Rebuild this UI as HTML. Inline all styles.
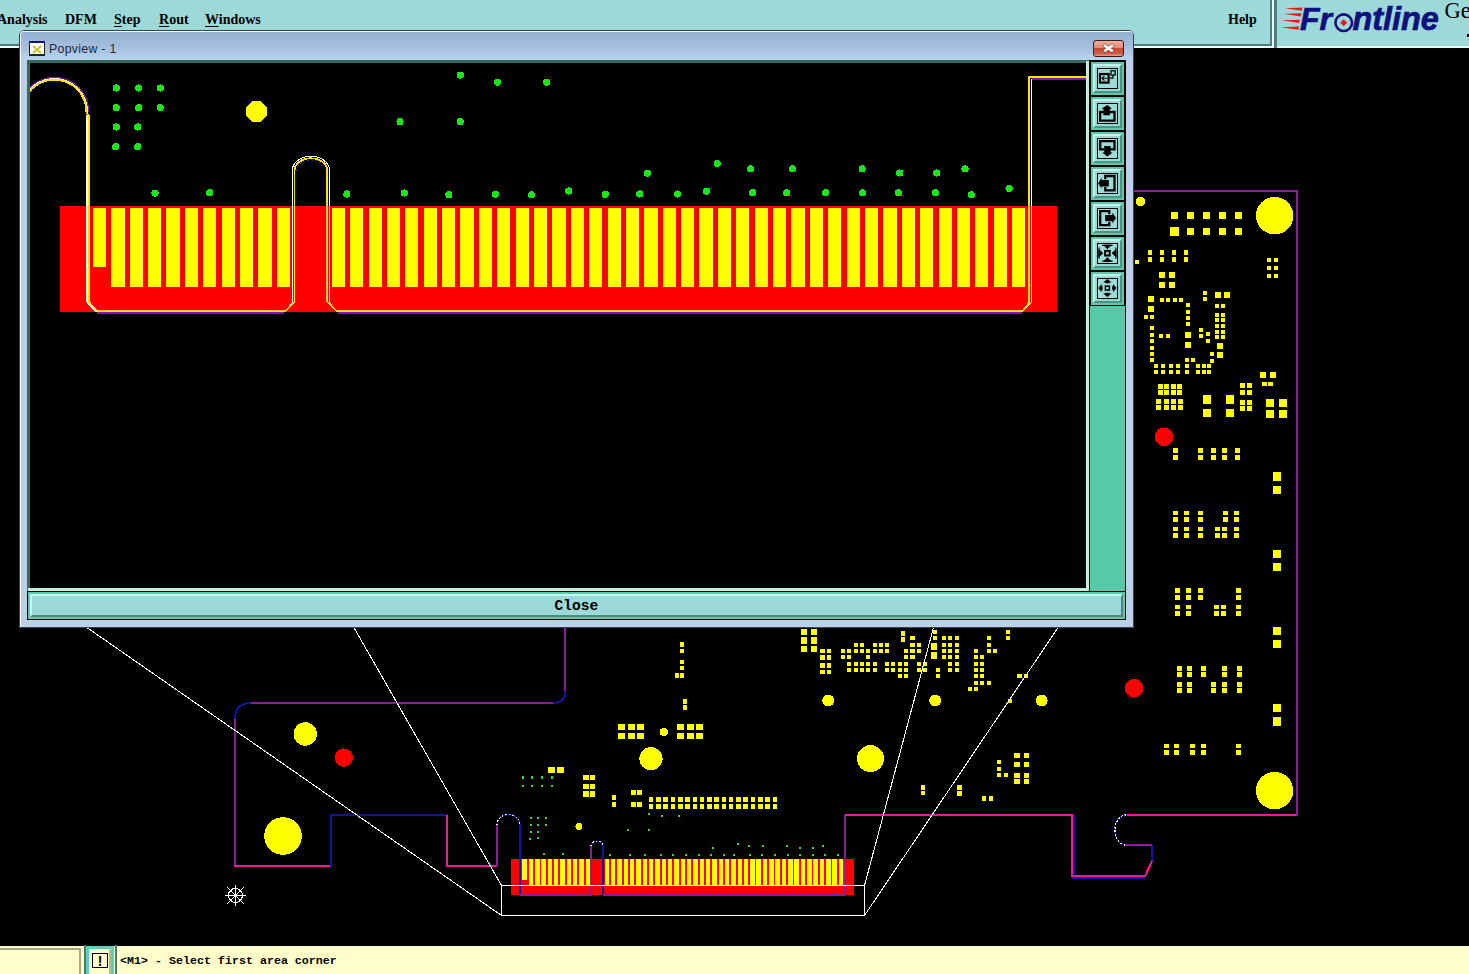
<!DOCTYPE html><html><head><meta charset="utf-8"><style>
*{margin:0;padding:0;box-sizing:border-box}
html,body{width:1469px;height:974px;overflow:hidden;background:#000}
body{position:relative;font-family:"Liberation Sans",sans-serif}
.abs{position:absolute}
#menubar{position:absolute;left:0;top:0;width:1469px;height:48px;background:#9dd9d9;overflow:hidden}
.menu{position:absolute;top:12px;font:bold 14px "Liberation Serif",serif;color:#000;white-space:nowrap}
.u{text-decoration:underline;text-underline-offset:2px}
#status{position:absolute;left:0;top:946px;width:1469px;height:28px;background:#fffecb}
#win{position:absolute;left:19px;top:30px;width:1115px;height:598px;border-radius:5px 5px 0 0;background:#bcd0e8;overflow:hidden}
.tb{position:absolute;left:1px;width:34px;height:34px;background:#5ccaa8}
</style></head><body>
<svg class="abs" style="left:0;top:0" width="1469" height="974" viewBox="0 0 1469 974" shape-rendering="crispEdges">
<rect x="510.9" y="858.9" width="343.1" height="35.9" fill="#ff0000"/>
<rect x="522.3" y="859.1" width="4.5" height="21.0" fill="#ffff00"/>
<rect x="528.6" y="859.1" width="4.5" height="26.0" fill="#ffff00"/>
<rect x="535.0" y="859.1" width="4.5" height="26.0" fill="#ffff00"/>
<rect x="541.3" y="859.1" width="4.5" height="26.0" fill="#ffff00"/>
<rect x="547.6" y="859.1" width="4.5" height="26.0" fill="#ffff00"/>
<rect x="553.9" y="859.1" width="4.5" height="26.0" fill="#ffff00"/>
<rect x="560.3" y="859.1" width="4.5" height="26.0" fill="#ffff00"/>
<rect x="566.6" y="859.1" width="4.5" height="26.0" fill="#ffff00"/>
<rect x="572.9" y="859.1" width="4.5" height="26.0" fill="#ffff00"/>
<rect x="579.2" y="859.1" width="4.5" height="26.0" fill="#ffff00"/>
<rect x="585.6" y="859.1" width="4.5" height="26.0" fill="#ffff00"/>
<rect x="604.6" y="859.1" width="4.5" height="26.0" fill="#ffff00"/>
<rect x="610.9" y="859.1" width="4.5" height="26.0" fill="#ffff00"/>
<rect x="617.3" y="859.1" width="4.5" height="26.0" fill="#ffff00"/>
<rect x="623.6" y="859.1" width="4.5" height="26.0" fill="#ffff00"/>
<rect x="629.9" y="859.1" width="4.5" height="26.0" fill="#ffff00"/>
<rect x="636.2" y="859.1" width="4.5" height="26.0" fill="#ffff00"/>
<rect x="642.6" y="859.1" width="4.5" height="26.0" fill="#ffff00"/>
<rect x="648.9" y="859.1" width="4.5" height="26.0" fill="#ffff00"/>
<rect x="655.2" y="859.1" width="4.5" height="26.0" fill="#ffff00"/>
<rect x="661.5" y="859.1" width="4.5" height="26.0" fill="#ffff00"/>
<rect x="667.9" y="859.1" width="4.5" height="26.0" fill="#ffff00"/>
<rect x="674.2" y="859.1" width="4.5" height="26.0" fill="#ffff00"/>
<rect x="680.5" y="859.1" width="4.5" height="26.0" fill="#ffff00"/>
<rect x="686.9" y="859.1" width="4.5" height="26.0" fill="#ffff00"/>
<rect x="693.2" y="859.1" width="4.5" height="26.0" fill="#ffff00"/>
<rect x="699.5" y="859.1" width="4.5" height="26.0" fill="#ffff00"/>
<rect x="705.8" y="859.1" width="4.5" height="26.0" fill="#ffff00"/>
<rect x="712.2" y="859.1" width="4.5" height="26.0" fill="#ffff00"/>
<rect x="718.5" y="859.1" width="4.5" height="26.0" fill="#ffff00"/>
<rect x="724.8" y="859.1" width="4.5" height="26.0" fill="#ffff00"/>
<rect x="731.1" y="859.1" width="4.5" height="26.0" fill="#ffff00"/>
<rect x="737.5" y="859.1" width="4.5" height="26.0" fill="#ffff00"/>
<rect x="743.8" y="859.1" width="4.5" height="26.0" fill="#ffff00"/>
<rect x="750.1" y="859.1" width="4.5" height="26.0" fill="#ffff00"/>
<rect x="756.4" y="859.1" width="4.5" height="26.0" fill="#ffff00"/>
<rect x="762.8" y="859.1" width="4.5" height="26.0" fill="#ffff00"/>
<rect x="769.1" y="859.1" width="4.5" height="26.0" fill="#ffff00"/>
<rect x="775.4" y="859.1" width="4.5" height="26.0" fill="#ffff00"/>
<rect x="781.8" y="859.1" width="4.5" height="26.0" fill="#ffff00"/>
<rect x="788.1" y="859.1" width="4.5" height="26.0" fill="#ffff00"/>
<rect x="794.4" y="859.1" width="4.5" height="26.0" fill="#ffff00"/>
<rect x="800.7" y="859.1" width="4.5" height="26.0" fill="#ffff00"/>
<rect x="807.1" y="859.1" width="4.5" height="26.0" fill="#ffff00"/>
<rect x="813.4" y="859.1" width="4.5" height="26.0" fill="#ffff00"/>
<rect x="819.7" y="859.1" width="4.5" height="26.0" fill="#ffff00"/>
<rect x="826.0" y="859.1" width="4.5" height="26.0" fill="#ffff00"/>
<rect x="832.4" y="859.1" width="4.5" height="26.0" fill="#ffff00"/>
<rect x="838.7" y="859.1" width="4.5" height="26.0" fill="#ffff00"/>
<path d="M565,620 L565,691" fill="none" stroke="#8c1c9c" stroke-width="2"/>
<path d="M565,691 Q565,703 553,703" fill="none" stroke="#1414a0" stroke-width="2"/>
<path d="M553,703 L251,703" fill="none" stroke="#8c1c9c" stroke-width="2"/>
<path d="M251,703 Q235,703 235,719" fill="none" stroke="#1414a0" stroke-width="2"/>
<path d="M235,719 L235,866" fill="none" stroke="#8c1c9c" stroke-width="2"/>
<path d="M234,866 L331,866" fill="none" stroke="#f01898" stroke-width="2"/>
<path d="M331,867 L331,815 L447,815" fill="none" stroke="#1414a0" stroke-width="2"/>
<path d="M447,815 L447,866 L497,866" fill="none" stroke="#f01898" stroke-width="2"/>
<path d="M497,866 L497,825" fill="none" stroke="#8c1c9c" stroke-width="2"/>
<path d="M520,825 L520,895" fill="none" stroke="#1414a0" stroke-width="2"/>
<path d="M520,895 L591,895 L591,846" fill="none" stroke="#8c1c9c" stroke-width="2"/>
<path d="M603,846 L603,895" fill="none" stroke="#1414a0" stroke-width="2"/>
<path d="M603,895 L845,895 L845,815" fill="none" stroke="#8c1c9c" stroke-width="2"/>
<path d="M845,815 L1072,815 L1072,876 L1145,876 L1152,861" fill="none" stroke="#f01898" stroke-width="2"/>
<path d="M1074,815 L1074,874 M1072,877.5 L1145,877.5" fill="none" stroke="#1414a0" stroke-width="2"/>
<path d="M1152,861 L1152,845" fill="none" stroke="#1414a0" stroke-width="2"/>
<path d="M1152,845 L1125,845" fill="none" stroke="#8c1c9c" stroke-width="2"/>
<path d="M1127,815 L1297,815" fill="none" stroke="#f01898" stroke-width="2"/>
<path d="M1297,816 L1297,191 L1120,191" fill="none" stroke="#8c1c9c" stroke-width="2"/>
<path d="M497,825 A11.5,10.5 0 0 1 520,825" fill="none" stroke="#1414a0" stroke-width="1.4"/>
<path d="M497,825 A11.5,10.5 0 0 1 520,825" fill="none" stroke="#f0f0ff" stroke-width="1.2" stroke-dasharray="1.5 2"/>
<path d="M591,846 A6,4.8 0 0 1 603,846" fill="none" stroke="#1414a0" stroke-width="1.4"/>
<path d="M591,846 A6,4.8 0 0 1 603,846" fill="none" stroke="#f0f0ff" stroke-width="1.2" stroke-dasharray="1.5 2"/>
<path d="M1125,845 A11,15 0 0 1 1127,815" fill="none" stroke="#1414a0" stroke-width="1.4"/>
<path d="M1125,845 A11,15 0 0 1 1127,815" fill="none" stroke="#f0f0ff" stroke-width="1.2" stroke-dasharray="1.5 2"/>
<circle cx="305.3" cy="734.0" r="11.7" fill="#ffff00"/>
<circle cx="343.8" cy="757.6" r="9.2" fill="#ff0000"/>
<circle cx="283.0" cy="836.0" r="18.8" fill="#ffff00"/>
<circle cx="651.0" cy="758.7" r="11.6" fill="#ffff00"/>
<circle cx="663.8" cy="732.0" r="4.0" fill="#ffff00"/>
<circle cx="578.9" cy="826.6" r="3.5" fill="#ffff00"/>
<circle cx="870.5" cy="758.6" r="13.5" fill="#ffff00"/>
<circle cx="828.3" cy="700.5" r="6.0" fill="#ffff00"/>
<circle cx="935.2" cy="700.5" r="6.0" fill="#ffff00"/>
<circle cx="1041.7" cy="700.5" r="6.0" fill="#ffff00"/>
<circle cx="1134.0" cy="688.2" r="9.2" fill="#ff0000"/>
<circle cx="1274.6" cy="790.6" r="18.7" fill="#ffff00"/>
<circle cx="1274.7" cy="215.7" r="18.7" fill="#ffff00"/>
<circle cx="1164.0" cy="436.8" r="9.3" fill="#ff0000"/>
<circle cx="1140.4" cy="201.4" r="4.9" fill="#ffff00"/>
<rect x="617.9" y="724.0" width="7.0" height="6.0" fill="#ffff00"/>
<rect x="617.9" y="732.8" width="7.0" height="6.0" fill="#ffff00"/>
<rect x="627.5" y="724.0" width="7.0" height="6.0" fill="#ffff00"/>
<rect x="627.5" y="732.8" width="7.0" height="6.0" fill="#ffff00"/>
<rect x="637.4" y="724.0" width="7.0" height="6.0" fill="#ffff00"/>
<rect x="637.4" y="732.8" width="7.0" height="6.0" fill="#ffff00"/>
<rect x="676.5" y="724.0" width="7.0" height="6.0" fill="#ffff00"/>
<rect x="676.5" y="732.8" width="7.0" height="6.0" fill="#ffff00"/>
<rect x="686.5" y="724.0" width="7.0" height="6.0" fill="#ffff00"/>
<rect x="686.5" y="732.8" width="7.0" height="6.0" fill="#ffff00"/>
<rect x="696.0" y="724.0" width="7.0" height="6.0" fill="#ffff00"/>
<rect x="696.0" y="732.8" width="7.0" height="6.0" fill="#ffff00"/>
<rect x="679.5" y="642.4" width="4.0" height="4.5" fill="#ffff00"/>
<rect x="679.5" y="648.5" width="4.0" height="4.5" fill="#ffff00"/>
<rect x="680.0" y="659.8" width="4.0" height="4.5" fill="#ffff00"/>
<rect x="680.0" y="665.8" width="4.0" height="4.5" fill="#ffff00"/>
<rect x="674.6" y="673.1" width="4.0" height="4.5" fill="#ffff00"/>
<rect x="680.3" y="673.1" width="4.0" height="4.5" fill="#ffff00"/>
<rect x="682.7" y="699.0" width="4.0" height="4.5" fill="#ffff00"/>
<rect x="682.7" y="705.1" width="4.0" height="4.5" fill="#ffff00"/>
<rect x="547.7" y="766.8" width="7.0" height="6.0" fill="#ffff00"/>
<rect x="557.3" y="766.8" width="7.0" height="6.0" fill="#ffff00"/>
<rect x="583.2" y="774.9" width="5.5" height="5.5" fill="#ffff00"/>
<rect x="583.2" y="783.5" width="5.5" height="5.5" fill="#ffff00"/>
<rect x="583.2" y="791.4" width="5.5" height="5.5" fill="#ffff00"/>
<rect x="589.6" y="774.9" width="5.5" height="5.5" fill="#ffff00"/>
<rect x="589.6" y="783.5" width="5.5" height="5.5" fill="#ffff00"/>
<rect x="589.6" y="791.4" width="5.5" height="5.5" fill="#ffff00"/>
<rect x="611.8" y="795.0" width="4.5" height="4.5" fill="#ffff00"/>
<rect x="611.8" y="802.0" width="4.5" height="4.5" fill="#ffff00"/>
<rect x="630.5" y="789.5" width="5.0" height="5.0" fill="#ffff00"/>
<rect x="630.5" y="801.7" width="5.0" height="5.0" fill="#ffff00"/>
<rect x="636.7" y="789.5" width="5.0" height="5.0" fill="#ffff00"/>
<rect x="636.7" y="801.7" width="5.0" height="5.0" fill="#ffff00"/>
<rect x="648.8" y="797.3" width="4.6" height="5.0" fill="#ffff00"/>
<rect x="648.8" y="803.7" width="4.6" height="5.0" fill="#ffff00"/>
<rect x="656.1" y="797.3" width="4.6" height="5.0" fill="#ffff00"/>
<rect x="656.1" y="803.7" width="4.6" height="5.0" fill="#ffff00"/>
<rect x="663.4" y="797.3" width="4.6" height="5.0" fill="#ffff00"/>
<rect x="663.4" y="803.7" width="4.6" height="5.0" fill="#ffff00"/>
<rect x="670.6" y="797.3" width="4.6" height="5.0" fill="#ffff00"/>
<rect x="670.6" y="803.7" width="4.6" height="5.0" fill="#ffff00"/>
<rect x="677.9" y="797.3" width="4.6" height="5.0" fill="#ffff00"/>
<rect x="677.9" y="803.7" width="4.6" height="5.0" fill="#ffff00"/>
<rect x="685.2" y="797.3" width="4.6" height="5.0" fill="#ffff00"/>
<rect x="685.2" y="803.7" width="4.6" height="5.0" fill="#ffff00"/>
<rect x="692.5" y="797.3" width="4.6" height="5.0" fill="#ffff00"/>
<rect x="692.5" y="803.7" width="4.6" height="5.0" fill="#ffff00"/>
<rect x="699.7" y="797.3" width="4.6" height="5.0" fill="#ffff00"/>
<rect x="699.7" y="803.7" width="4.6" height="5.0" fill="#ffff00"/>
<rect x="707.0" y="797.3" width="4.6" height="5.0" fill="#ffff00"/>
<rect x="707.0" y="803.7" width="4.6" height="5.0" fill="#ffff00"/>
<rect x="714.3" y="797.3" width="4.6" height="5.0" fill="#ffff00"/>
<rect x="714.3" y="803.7" width="4.6" height="5.0" fill="#ffff00"/>
<rect x="721.6" y="797.3" width="4.6" height="5.0" fill="#ffff00"/>
<rect x="721.6" y="803.7" width="4.6" height="5.0" fill="#ffff00"/>
<rect x="728.8" y="797.3" width="4.6" height="5.0" fill="#ffff00"/>
<rect x="728.8" y="803.7" width="4.6" height="5.0" fill="#ffff00"/>
<rect x="736.1" y="797.3" width="4.6" height="5.0" fill="#ffff00"/>
<rect x="736.1" y="803.7" width="4.6" height="5.0" fill="#ffff00"/>
<rect x="743.4" y="797.3" width="4.6" height="5.0" fill="#ffff00"/>
<rect x="743.4" y="803.7" width="4.6" height="5.0" fill="#ffff00"/>
<rect x="750.7" y="797.3" width="4.6" height="5.0" fill="#ffff00"/>
<rect x="750.7" y="803.7" width="4.6" height="5.0" fill="#ffff00"/>
<rect x="757.9" y="797.3" width="4.6" height="5.0" fill="#ffff00"/>
<rect x="757.9" y="803.7" width="4.6" height="5.0" fill="#ffff00"/>
<rect x="765.2" y="797.3" width="4.6" height="5.0" fill="#ffff00"/>
<rect x="765.2" y="803.7" width="4.6" height="5.0" fill="#ffff00"/>
<rect x="772.5" y="797.3" width="4.6" height="5.0" fill="#ffff00"/>
<rect x="772.5" y="803.7" width="4.6" height="5.0" fill="#ffff00"/>
<rect x="521.7" y="776.4" width="2.4" height="2.4" fill="#3ad83a"/>
<rect x="530.8" y="776.4" width="2.4" height="2.4" fill="#3ad83a"/>
<rect x="540.7" y="776.4" width="2.4" height="2.4" fill="#3ad83a"/>
<rect x="550.5" y="776.4" width="2.4" height="2.4" fill="#3ad83a"/>
<rect x="521.7" y="784.6" width="2.4" height="2.4" fill="#3ad83a"/>
<rect x="530.8" y="784.6" width="2.4" height="2.4" fill="#3ad83a"/>
<rect x="540.7" y="784.6" width="2.4" height="2.4" fill="#3ad83a"/>
<rect x="550.5" y="784.6" width="2.4" height="2.4" fill="#3ad83a"/>
<rect x="529.8" y="816.7" width="2.4" height="2.4" fill="#3ad83a"/>
<rect x="536.8" y="816.7" width="2.4" height="2.4" fill="#3ad83a"/>
<rect x="544.8" y="816.7" width="2.4" height="2.4" fill="#3ad83a"/>
<rect x="529.8" y="823.7" width="2.4" height="2.4" fill="#3ad83a"/>
<rect x="536.8" y="823.7" width="2.4" height="2.4" fill="#3ad83a"/>
<rect x="544.8" y="823.7" width="2.4" height="2.4" fill="#3ad83a"/>
<rect x="529.8" y="830.6" width="2.4" height="2.4" fill="#3ad83a"/>
<rect x="536.8" y="830.6" width="2.4" height="2.4" fill="#3ad83a"/>
<rect x="528.8" y="837.6" width="2.4" height="2.4" fill="#3ad83a"/>
<rect x="536.8" y="836.8" width="2.4" height="2.4" fill="#3ad83a"/>
<rect x="542.7" y="852.6" width="2.4" height="2.4" fill="#3ad83a"/>
<rect x="561.7" y="852.6" width="2.4" height="2.4" fill="#3ad83a"/>
<rect x="626.7" y="828.6" width="2.4" height="2.4" fill="#3ad83a"/>
<rect x="608.6" y="853.6" width="2.4" height="2.4" fill="#3ad83a"/>
<rect x="628.6" y="853.6" width="2.4" height="2.4" fill="#3ad83a"/>
<rect x="647.8" y="812.7" width="2.4" height="2.4" fill="#3ad83a"/>
<rect x="660.8" y="814.6" width="2.4" height="2.4" fill="#3ad83a"/>
<rect x="677.7" y="814.6" width="2.4" height="2.4" fill="#3ad83a"/>
<rect x="647.8" y="828.7" width="2.4" height="2.4" fill="#3ad83a"/>
<rect x="643.7" y="853.5" width="2.4" height="2.4" fill="#3ad83a"/>
<rect x="659.7" y="853.5" width="2.4" height="2.4" fill="#3ad83a"/>
<rect x="672.0" y="853.5" width="2.4" height="2.4" fill="#3ad83a"/>
<rect x="684.9" y="853.5" width="2.4" height="2.4" fill="#3ad83a"/>
<rect x="697.6" y="853.5" width="2.4" height="2.4" fill="#3ad83a"/>
<rect x="709.9" y="853.5" width="2.4" height="2.4" fill="#3ad83a"/>
<rect x="722.6" y="853.5" width="2.4" height="2.4" fill="#3ad83a"/>
<rect x="732.8" y="853.5" width="2.4" height="2.4" fill="#3ad83a"/>
<rect x="748.8" y="853.5" width="2.4" height="2.4" fill="#3ad83a"/>
<rect x="760.8" y="853.5" width="2.4" height="2.4" fill="#3ad83a"/>
<rect x="773.6" y="853.5" width="2.4" height="2.4" fill="#3ad83a"/>
<rect x="786.7" y="853.5" width="2.4" height="2.4" fill="#3ad83a"/>
<rect x="798.9" y="853.5" width="2.4" height="2.4" fill="#3ad83a"/>
<rect x="811.7" y="853.5" width="2.4" height="2.4" fill="#3ad83a"/>
<rect x="823.8" y="853.5" width="2.4" height="2.4" fill="#3ad83a"/>
<rect x="836.8" y="853.5" width="2.4" height="2.4" fill="#3ad83a"/>
<rect x="711.8" y="846.7" width="2.4" height="2.4" fill="#3ad83a"/>
<rect x="736.8" y="842.6" width="2.4" height="2.4" fill="#3ad83a"/>
<rect x="747.8" y="844.6" width="2.4" height="2.4" fill="#3ad83a"/>
<rect x="761.7" y="844.6" width="2.4" height="2.4" fill="#3ad83a"/>
<rect x="785.8" y="844.6" width="2.4" height="2.4" fill="#3ad83a"/>
<rect x="798.8" y="846.7" width="2.4" height="2.4" fill="#3ad83a"/>
<rect x="811.7" y="846.7" width="2.4" height="2.4" fill="#3ad83a"/>
<rect x="821.8" y="844.6" width="2.4" height="2.4" fill="#3ad83a"/>
<rect x="801.0" y="628.8" width="6.0" height="6.5" fill="#ffff00"/>
<rect x="801.0" y="637.2" width="6.0" height="6.5" fill="#ffff00"/>
<rect x="801.0" y="645.5" width="6.0" height="6.5" fill="#ffff00"/>
<rect x="811.0" y="628.8" width="6.0" height="6.5" fill="#ffff00"/>
<rect x="811.0" y="637.2" width="6.0" height="6.5" fill="#ffff00"/>
<rect x="811.0" y="645.5" width="6.0" height="6.5" fill="#ffff00"/>
<rect x="820.2" y="648.8" width="4.5" height="4.5" fill="#ffff00"/>
<rect x="820.2" y="655.2" width="4.5" height="4.5" fill="#ffff00"/>
<rect x="820.2" y="663.1" width="4.5" height="4.5" fill="#ffff00"/>
<rect x="820.2" y="669.5" width="4.5" height="4.5" fill="#ffff00"/>
<rect x="826.6" y="648.8" width="4.5" height="4.5" fill="#ffff00"/>
<rect x="826.6" y="655.2" width="4.5" height="4.5" fill="#ffff00"/>
<rect x="826.6" y="663.1" width="4.5" height="4.5" fill="#ffff00"/>
<rect x="826.6" y="669.5" width="4.5" height="4.5" fill="#ffff00"/>
<rect x="853.5" y="642.6" width="4.0" height="4.0" fill="#ffff00"/>
<rect x="860.0" y="642.6" width="4.0" height="4.0" fill="#ffff00"/>
<rect x="872.5" y="642.6" width="4.0" height="4.0" fill="#ffff00"/>
<rect x="878.8" y="642.6" width="4.0" height="4.0" fill="#ffff00"/>
<rect x="884.9" y="642.6" width="4.0" height="4.0" fill="#ffff00"/>
<rect x="841.0" y="649.1" width="4.0" height="4.0" fill="#ffff00"/>
<rect x="846.9" y="649.1" width="4.0" height="4.0" fill="#ffff00"/>
<rect x="853.5" y="649.1" width="4.0" height="4.0" fill="#ffff00"/>
<rect x="860.0" y="649.1" width="4.0" height="4.0" fill="#ffff00"/>
<rect x="866.0" y="649.1" width="4.0" height="4.0" fill="#ffff00"/>
<rect x="872.5" y="649.1" width="4.0" height="4.0" fill="#ffff00"/>
<rect x="878.8" y="649.1" width="4.0" height="4.0" fill="#ffff00"/>
<rect x="884.9" y="649.1" width="4.0" height="4.0" fill="#ffff00"/>
<rect x="903.9" y="649.1" width="4.0" height="4.0" fill="#ffff00"/>
<rect x="910.4" y="649.1" width="4.0" height="4.0" fill="#ffff00"/>
<rect x="841.0" y="655.3" width="4.0" height="4.0" fill="#ffff00"/>
<rect x="846.9" y="655.3" width="4.0" height="4.0" fill="#ffff00"/>
<rect x="866.0" y="655.3" width="4.0" height="4.0" fill="#ffff00"/>
<rect x="903.9" y="655.3" width="4.0" height="4.0" fill="#ffff00"/>
<rect x="910.4" y="655.3" width="4.0" height="4.0" fill="#ffff00"/>
<rect x="846.9" y="661.8" width="4.0" height="4.0" fill="#ffff00"/>
<rect x="846.9" y="668.0" width="4.0" height="4.0" fill="#ffff00"/>
<rect x="853.5" y="661.8" width="4.0" height="4.0" fill="#ffff00"/>
<rect x="853.5" y="668.0" width="4.0" height="4.0" fill="#ffff00"/>
<rect x="860.0" y="661.8" width="4.0" height="4.0" fill="#ffff00"/>
<rect x="860.0" y="668.0" width="4.0" height="4.0" fill="#ffff00"/>
<rect x="866.0" y="661.8" width="4.0" height="4.0" fill="#ffff00"/>
<rect x="866.0" y="668.0" width="4.0" height="4.0" fill="#ffff00"/>
<rect x="872.5" y="661.8" width="4.0" height="4.0" fill="#ffff00"/>
<rect x="872.5" y="668.0" width="4.0" height="4.0" fill="#ffff00"/>
<rect x="884.9" y="661.8" width="4.0" height="4.0" fill="#ffff00"/>
<rect x="884.9" y="668.0" width="4.0" height="4.0" fill="#ffff00"/>
<rect x="891.4" y="661.8" width="4.0" height="4.0" fill="#ffff00"/>
<rect x="891.4" y="668.0" width="4.0" height="4.0" fill="#ffff00"/>
<rect x="898.0" y="661.8" width="4.0" height="4.0" fill="#ffff00"/>
<rect x="898.0" y="668.0" width="4.0" height="4.0" fill="#ffff00"/>
<rect x="903.9" y="661.8" width="4.0" height="4.0" fill="#ffff00"/>
<rect x="903.9" y="668.0" width="4.0" height="4.0" fill="#ffff00"/>
<rect x="898.0" y="674.0" width="4.0" height="4.0" fill="#ffff00"/>
<rect x="903.9" y="674.0" width="4.0" height="4.0" fill="#ffff00"/>
<rect x="910.4" y="636.1" width="4.0" height="4.0" fill="#ffff00"/>
<rect x="910.4" y="642.6" width="4.0" height="4.0" fill="#ffff00"/>
<rect x="904.2" y="649.1" width="4.0" height="4.0" fill="#ffff00"/>
<rect x="904.2" y="655.3" width="4.0" height="4.0" fill="#ffff00"/>
<rect x="904.2" y="661.8" width="4.0" height="4.0" fill="#ffff00"/>
<rect x="904.2" y="668.0" width="4.0" height="4.0" fill="#ffff00"/>
<rect x="904.2" y="674.1" width="4.0" height="4.0" fill="#ffff00"/>
<rect x="910.5" y="636.1" width="4.0" height="4.0" fill="#ffff00"/>
<rect x="910.5" y="642.6" width="4.0" height="4.0" fill="#ffff00"/>
<rect x="910.5" y="649.1" width="4.0" height="4.0" fill="#ffff00"/>
<rect x="910.5" y="655.3" width="4.0" height="4.0" fill="#ffff00"/>
<rect x="917.0" y="642.6" width="4.0" height="4.0" fill="#ffff00"/>
<rect x="917.0" y="649.1" width="4.0" height="4.0" fill="#ffff00"/>
<rect x="917.0" y="661.8" width="4.0" height="4.0" fill="#ffff00"/>
<rect x="917.0" y="668.0" width="4.0" height="4.0" fill="#ffff00"/>
<rect x="923.0" y="661.8" width="4.0" height="4.0" fill="#ffff00"/>
<rect x="923.0" y="668.0" width="4.0" height="4.0" fill="#ffff00"/>
<rect x="932.8" y="630.4" width="4.0" height="4.0" fill="#ffff00"/>
<rect x="932.8" y="636.1" width="4.0" height="4.0" fill="#ffff00"/>
<rect x="936.0" y="668.0" width="4.0" height="4.0" fill="#ffff00"/>
<rect x="936.0" y="674.1" width="4.0" height="4.0" fill="#ffff00"/>
<rect x="942.0" y="636.1" width="4.0" height="4.0" fill="#ffff00"/>
<rect x="942.0" y="642.6" width="4.0" height="4.0" fill="#ffff00"/>
<rect x="942.0" y="649.1" width="4.0" height="4.0" fill="#ffff00"/>
<rect x="942.0" y="655.3" width="4.0" height="4.0" fill="#ffff00"/>
<rect x="948.3" y="636.1" width="4.0" height="4.0" fill="#ffff00"/>
<rect x="948.3" y="642.6" width="4.0" height="4.0" fill="#ffff00"/>
<rect x="948.3" y="649.1" width="4.0" height="4.0" fill="#ffff00"/>
<rect x="948.3" y="655.3" width="4.0" height="4.0" fill="#ffff00"/>
<rect x="954.9" y="636.1" width="4.0" height="4.0" fill="#ffff00"/>
<rect x="954.9" y="642.6" width="4.0" height="4.0" fill="#ffff00"/>
<rect x="954.9" y="649.1" width="4.0" height="4.0" fill="#ffff00"/>
<rect x="954.9" y="655.3" width="4.0" height="4.0" fill="#ffff00"/>
<rect x="948.3" y="661.8" width="4.0" height="4.0" fill="#ffff00"/>
<rect x="948.3" y="668.0" width="4.0" height="4.0" fill="#ffff00"/>
<rect x="954.9" y="661.8" width="4.0" height="4.0" fill="#ffff00"/>
<rect x="954.9" y="668.0" width="4.0" height="4.0" fill="#ffff00"/>
<rect x="973.9" y="655.3" width="4.0" height="4.0" fill="#ffff00"/>
<rect x="973.9" y="661.8" width="4.0" height="4.0" fill="#ffff00"/>
<rect x="973.9" y="668.0" width="4.0" height="4.0" fill="#ffff00"/>
<rect x="973.9" y="674.1" width="4.0" height="4.0" fill="#ffff00"/>
<rect x="980.0" y="655.3" width="4.0" height="4.0" fill="#ffff00"/>
<rect x="980.0" y="661.8" width="4.0" height="4.0" fill="#ffff00"/>
<rect x="980.0" y="668.0" width="4.0" height="4.0" fill="#ffff00"/>
<rect x="980.0" y="674.1" width="4.0" height="4.0" fill="#ffff00"/>
<rect x="973.9" y="649.1" width="4.0" height="4.0" fill="#ffff00"/>
<rect x="973.9" y="681.0" width="4.0" height="4.0" fill="#ffff00"/>
<rect x="980.0" y="681.0" width="4.0" height="4.0" fill="#ffff00"/>
<rect x="986.5" y="681.0" width="4.0" height="4.0" fill="#ffff00"/>
<rect x="967.5" y="687.1" width="4.0" height="4.0" fill="#ffff00"/>
<rect x="973.9" y="687.1" width="4.0" height="4.0" fill="#ffff00"/>
<rect x="986.5" y="636.1" width="4.0" height="4.0" fill="#ffff00"/>
<rect x="986.5" y="642.6" width="4.0" height="4.0" fill="#ffff00"/>
<rect x="986.5" y="649.1" width="4.0" height="4.0" fill="#ffff00"/>
<rect x="992.9" y="649.1" width="4.0" height="4.0" fill="#ffff00"/>
<rect x="1005.5" y="630.4" width="4.0" height="4.0" fill="#ffff00"/>
<rect x="1005.5" y="636.1" width="4.0" height="4.0" fill="#ffff00"/>
<rect x="1018.2" y="674.1" width="4.0" height="4.0" fill="#ffff00"/>
<rect x="1017.0" y="673.9" width="4.0" height="4.0" fill="#ffff00"/>
<rect x="1024.0" y="673.9" width="4.0" height="4.0" fill="#ffff00"/>
<rect x="1007.7" y="698.5" width="4.0" height="4.0" fill="#ffff00"/>
<rect x="900.8" y="630.7" width="4.0" height="5.0" fill="#ffff00"/>
<rect x="900.8" y="637.2" width="4.0" height="5.0" fill="#ffff00"/>
<rect x="931.2" y="643.0" width="6.0" height="6.5" fill="#ffff00"/>
<rect x="931.2" y="652.4" width="6.0" height="6.5" fill="#ffff00"/>
<rect x="997.4" y="759.5" width="4.0" height="4.5" fill="#ffff00"/>
<rect x="997.4" y="766.6" width="4.0" height="4.5" fill="#ffff00"/>
<rect x="997.4" y="772.8" width="4.0" height="4.5" fill="#ffff00"/>
<rect x="1003.6" y="772.8" width="4.0" height="4.5" fill="#ffff00"/>
<rect x="920.9" y="785.0" width="4.0" height="4.5" fill="#ffff00"/>
<rect x="920.9" y="790.9" width="4.0" height="4.5" fill="#ffff00"/>
<rect x="982.0" y="796.0" width="4.0" height="4.5" fill="#ffff00"/>
<rect x="988.8" y="796.0" width="4.0" height="4.5" fill="#ffff00"/>
<rect x="1014.1" y="753.0" width="5.5" height="5.0" fill="#ffff00"/>
<rect x="1014.1" y="762.3" width="5.5" height="5.0" fill="#ffff00"/>
<rect x="1014.1" y="772.5" width="5.5" height="5.0" fill="#ffff00"/>
<rect x="1014.1" y="778.7" width="5.5" height="5.0" fill="#ffff00"/>
<rect x="1023.8" y="753.0" width="5.5" height="5.0" fill="#ffff00"/>
<rect x="1023.8" y="762.3" width="5.5" height="5.0" fill="#ffff00"/>
<rect x="1023.8" y="772.5" width="5.5" height="5.0" fill="#ffff00"/>
<rect x="1023.8" y="778.7" width="5.5" height="5.0" fill="#ffff00"/>
<rect x="956.9" y="784.8" width="5.0" height="5.0" fill="#ffff00"/>
<rect x="956.9" y="790.6" width="5.0" height="5.0" fill="#ffff00"/>
<rect x="1170.6" y="211.5" width="7.6" height="7.6" rx="2.5" fill="#ffff00"/>
<rect x="1186.6" y="211.5" width="7.6" height="7.6" rx="2.5" fill="#ffff00"/>
<rect x="1202.6" y="211.5" width="7.6" height="7.6" rx="2.5" fill="#ffff00"/>
<rect x="1218.7" y="211.5" width="7.6" height="7.6" rx="2.5" fill="#ffff00"/>
<rect x="1234.7" y="211.5" width="7.6" height="7.6" rx="2.5" fill="#ffff00"/>
<rect x="1169.9" y="226.8" width="9.0" height="9.0" fill="#ffff00"/>
<rect x="1186.6" y="227.5" width="7.6" height="7.6" rx="2.5" fill="#ffff00"/>
<rect x="1202.6" y="227.5" width="7.6" height="7.6" rx="2.5" fill="#ffff00"/>
<rect x="1218.7" y="227.5" width="7.6" height="7.6" rx="2.5" fill="#ffff00"/>
<rect x="1234.7" y="227.5" width="7.6" height="7.6" rx="2.5" fill="#ffff00"/>
<rect x="1147.8" y="250.3" width="4.0" height="4.3" fill="#ffff00"/>
<rect x="1147.8" y="257.2" width="4.0" height="4.3" fill="#ffff00"/>
<rect x="1159.9" y="250.3" width="4.0" height="4.3" fill="#ffff00"/>
<rect x="1159.9" y="257.2" width="4.0" height="4.3" fill="#ffff00"/>
<rect x="1172.2" y="250.3" width="4.0" height="4.3" fill="#ffff00"/>
<rect x="1172.2" y="257.2" width="4.0" height="4.3" fill="#ffff00"/>
<rect x="1184.3" y="250.3" width="4.0" height="4.3" fill="#ffff00"/>
<rect x="1184.3" y="257.2" width="4.0" height="4.3" fill="#ffff00"/>
<rect x="1135.2" y="260.3" width="4.0" height="4.0" fill="#ffff00"/>
<rect x="1159.0" y="271.9" width="6.0" height="6.0" fill="#ffff00"/>
<rect x="1159.0" y="281.8" width="6.0" height="6.0" fill="#ffff00"/>
<rect x="1169.4" y="271.9" width="6.0" height="6.0" fill="#ffff00"/>
<rect x="1169.4" y="281.8" width="6.0" height="6.0" fill="#ffff00"/>
<rect x="1266.8" y="258.1" width="4.0" height="4.0" fill="#ffff00"/>
<rect x="1266.8" y="266.0" width="4.0" height="4.0" fill="#ffff00"/>
<rect x="1266.8" y="274.2" width="4.0" height="4.0" fill="#ffff00"/>
<rect x="1273.5" y="258.1" width="4.0" height="4.0" fill="#ffff00"/>
<rect x="1273.5" y="266.0" width="4.0" height="4.0" fill="#ffff00"/>
<rect x="1273.5" y="274.2" width="4.0" height="4.0" fill="#ffff00"/>
<rect x="1159.9" y="298.0" width="4.0" height="4.0" fill="#ffff00"/>
<rect x="1166.3" y="298.0" width="4.0" height="4.0" fill="#ffff00"/>
<rect x="1172.9" y="298.0" width="4.0" height="4.0" fill="#ffff00"/>
<rect x="1179.3" y="298.0" width="4.0" height="4.0" fill="#ffff00"/>
<rect x="1185.9" y="303.0" width="4.0" height="4.0" fill="#ffff00"/>
<rect x="1185.9" y="309.6" width="4.0" height="4.0" fill="#ffff00"/>
<rect x="1185.9" y="316.0" width="4.0" height="4.0" fill="#ffff00"/>
<rect x="1185.9" y="322.0" width="4.0" height="4.0" fill="#ffff00"/>
<rect x="1143.8" y="315.2" width="4.0" height="4.0" fill="#ffff00"/>
<rect x="1150.0" y="315.2" width="4.0" height="4.0" fill="#ffff00"/>
<rect x="1159.1" y="334.0" width="4.0" height="4.0" fill="#ffff00"/>
<rect x="1165.6" y="334.0" width="4.0" height="4.0" fill="#ffff00"/>
<rect x="1199.4" y="327.8" width="4.0" height="4.0" fill="#ffff00"/>
<rect x="1199.4" y="334.0" width="4.0" height="4.0" fill="#ffff00"/>
<rect x="1206.0" y="332.1" width="4.0" height="4.0" fill="#ffff00"/>
<rect x="1206.0" y="338.6" width="4.0" height="4.0" fill="#ffff00"/>
<rect x="1203.0" y="291.4" width="4.0" height="4.0" fill="#ffff00"/>
<rect x="1203.0" y="297.3" width="4.0" height="4.0" fill="#ffff00"/>
<rect x="1209.9" y="352.2" width="4.0" height="4.0" fill="#ffff00"/>
<rect x="1209.9" y="358.7" width="4.0" height="4.0" fill="#ffff00"/>
<rect x="1185.0" y="358.4" width="4.0" height="4.0" fill="#ffff00"/>
<rect x="1191.2" y="358.4" width="4.0" height="4.0" fill="#ffff00"/>
<rect x="1150.0" y="326.0" width="4.0" height="4.0" fill="#ffff00"/>
<rect x="1150.0" y="332.5" width="4.0" height="4.0" fill="#ffff00"/>
<rect x="1150.0" y="339.0" width="4.0" height="4.0" fill="#ffff00"/>
<rect x="1150.0" y="345.5" width="4.0" height="4.0" fill="#ffff00"/>
<rect x="1150.0" y="352.2" width="4.0" height="4.0" fill="#ffff00"/>
<rect x="1150.0" y="358.4" width="4.0" height="4.0" fill="#ffff00"/>
<rect x="1214.9" y="304.1" width="4.0" height="4.0" fill="#ffff00"/>
<rect x="1214.9" y="313.0" width="4.0" height="4.0" fill="#ffff00"/>
<rect x="1214.9" y="318.0" width="4.0" height="4.0" fill="#ffff00"/>
<rect x="1214.9" y="323.9" width="4.0" height="4.0" fill="#ffff00"/>
<rect x="1214.9" y="330.0" width="4.0" height="4.0" fill="#ffff00"/>
<rect x="1214.9" y="335.0" width="4.0" height="4.0" fill="#ffff00"/>
<rect x="1220.9" y="304.1" width="4.0" height="4.0" fill="#ffff00"/>
<rect x="1220.9" y="313.0" width="4.0" height="4.0" fill="#ffff00"/>
<rect x="1220.9" y="318.0" width="4.0" height="4.0" fill="#ffff00"/>
<rect x="1220.9" y="323.9" width="4.0" height="4.0" fill="#ffff00"/>
<rect x="1220.9" y="330.0" width="4.0" height="4.0" fill="#ffff00"/>
<rect x="1220.9" y="335.0" width="4.0" height="4.0" fill="#ffff00"/>
<rect x="1154.3" y="363.7" width="4.0" height="4.0" fill="#ffff00"/>
<rect x="1154.3" y="369.5" width="4.0" height="4.0" fill="#ffff00"/>
<rect x="1161.0" y="363.7" width="4.0" height="4.0" fill="#ffff00"/>
<rect x="1161.0" y="369.5" width="4.0" height="4.0" fill="#ffff00"/>
<rect x="1168.9" y="363.7" width="4.0" height="4.0" fill="#ffff00"/>
<rect x="1168.9" y="369.5" width="4.0" height="4.0" fill="#ffff00"/>
<rect x="1175.7" y="363.7" width="4.0" height="4.0" fill="#ffff00"/>
<rect x="1175.7" y="369.5" width="4.0" height="4.0" fill="#ffff00"/>
<rect x="1185.0" y="363.7" width="4.0" height="4.0" fill="#ffff00"/>
<rect x="1185.0" y="369.5" width="4.0" height="4.0" fill="#ffff00"/>
<rect x="1195.8" y="363.7" width="4.0" height="4.0" fill="#ffff00"/>
<rect x="1195.8" y="369.5" width="4.0" height="4.0" fill="#ffff00"/>
<rect x="1202.0" y="363.7" width="4.0" height="4.0" fill="#ffff00"/>
<rect x="1202.0" y="369.5" width="4.0" height="4.0" fill="#ffff00"/>
<rect x="1207.0" y="363.7" width="4.0" height="4.0" fill="#ffff00"/>
<rect x="1207.0" y="369.5" width="4.0" height="4.0" fill="#ffff00"/>
<rect x="1147.8" y="296.3" width="6.0" height="6.0" fill="#ffff00"/>
<rect x="1147.8" y="306.3" width="6.0" height="6.0" fill="#ffff00"/>
<rect x="1184.9" y="332.1" width="6.0" height="6.0" fill="#ffff00"/>
<rect x="1184.9" y="341.9" width="6.0" height="6.0" fill="#ffff00"/>
<rect x="1214.9" y="291.6" width="6.0" height="6.0" fill="#ffff00"/>
<rect x="1224.0" y="291.6" width="6.0" height="6.0" fill="#ffff00"/>
<rect x="1216.8" y="342.6" width="6.0" height="6.0" fill="#ffff00"/>
<rect x="1216.8" y="352.0" width="6.0" height="6.0" fill="#ffff00"/>
<rect x="1158.0" y="384.0" width="5.0" height="5.0" fill="#ffff00"/>
<rect x="1158.0" y="389.9" width="5.0" height="5.0" fill="#ffff00"/>
<rect x="1164.0" y="384.0" width="5.0" height="5.0" fill="#ffff00"/>
<rect x="1164.0" y="389.9" width="5.0" height="5.0" fill="#ffff00"/>
<rect x="1171.1" y="384.0" width="5.0" height="5.0" fill="#ffff00"/>
<rect x="1171.1" y="389.9" width="5.0" height="5.0" fill="#ffff00"/>
<rect x="1177.0" y="384.0" width="5.0" height="5.0" fill="#ffff00"/>
<rect x="1177.0" y="389.9" width="5.0" height="5.0" fill="#ffff00"/>
<rect x="1156.0" y="398.9" width="5.0" height="5.0" fill="#ffff00"/>
<rect x="1156.0" y="404.9" width="5.0" height="5.0" fill="#ffff00"/>
<rect x="1164.0" y="398.9" width="5.0" height="5.0" fill="#ffff00"/>
<rect x="1164.0" y="404.9" width="5.0" height="5.0" fill="#ffff00"/>
<rect x="1171.1" y="398.9" width="5.0" height="5.0" fill="#ffff00"/>
<rect x="1171.1" y="404.9" width="5.0" height="5.0" fill="#ffff00"/>
<rect x="1178.0" y="398.9" width="5.0" height="5.0" fill="#ffff00"/>
<rect x="1178.0" y="404.9" width="5.0" height="5.0" fill="#ffff00"/>
<rect x="1203.0" y="395.0" width="8.0" height="8.7" fill="#ffff00"/>
<rect x="1203.0" y="408.6" width="8.0" height="8.7" fill="#ffff00"/>
<rect x="1226.4" y="395.0" width="8.0" height="8.7" fill="#ffff00"/>
<rect x="1226.4" y="408.6" width="8.0" height="8.7" fill="#ffff00"/>
<rect x="1239.9" y="383.1" width="5.0" height="5.0" fill="#ffff00"/>
<rect x="1239.9" y="389.5" width="5.0" height="5.0" fill="#ffff00"/>
<rect x="1239.9" y="399.8" width="5.0" height="5.0" fill="#ffff00"/>
<rect x="1239.9" y="405.5" width="5.0" height="5.0" fill="#ffff00"/>
<rect x="1246.5" y="383.1" width="5.0" height="5.0" fill="#ffff00"/>
<rect x="1246.5" y="389.5" width="5.0" height="5.0" fill="#ffff00"/>
<rect x="1246.5" y="399.8" width="5.0" height="5.0" fill="#ffff00"/>
<rect x="1246.5" y="405.5" width="5.0" height="5.0" fill="#ffff00"/>
<rect x="1260.1" y="371.9" width="6.0" height="6.0" fill="#ffff00"/>
<rect x="1269.9" y="371.9" width="6.0" height="6.0" fill="#ffff00"/>
<rect x="1261.7" y="382.0" width="5.0" height="4.0" fill="#ffff00"/>
<rect x="1267.7" y="382.0" width="5.0" height="4.0" fill="#ffff00"/>
<rect x="1265.6" y="398.5" width="8.0" height="8.0" fill="#ffff00"/>
<rect x="1265.6" y="410.0" width="8.0" height="8.0" fill="#ffff00"/>
<rect x="1278.7" y="398.5" width="8.0" height="8.0" fill="#ffff00"/>
<rect x="1278.7" y="410.0" width="8.0" height="8.0" fill="#ffff00"/>
<rect x="1173.0" y="448.1" width="5.0" height="4.7" fill="#ffff00"/>
<rect x="1173.0" y="454.8" width="5.0" height="4.7" fill="#ffff00"/>
<rect x="1198.0" y="448.1" width="5.0" height="4.7" fill="#ffff00"/>
<rect x="1198.0" y="454.8" width="5.0" height="4.7" fill="#ffff00"/>
<rect x="1211.3" y="448.1" width="5.0" height="4.7" fill="#ffff00"/>
<rect x="1211.3" y="454.8" width="5.0" height="4.7" fill="#ffff00"/>
<rect x="1222.0" y="448.1" width="5.0" height="4.7" fill="#ffff00"/>
<rect x="1222.0" y="454.8" width="5.0" height="4.7" fill="#ffff00"/>
<rect x="1234.9" y="448.1" width="5.0" height="4.7" fill="#ffff00"/>
<rect x="1234.9" y="454.8" width="5.0" height="4.7" fill="#ffff00"/>
<rect x="1272.8" y="472.1" width="8.0" height="8.5" fill="#ffff00"/>
<rect x="1272.8" y="485.6" width="8.0" height="8.5" fill="#ffff00"/>
<rect x="1272.8" y="549.6" width="8.0" height="8.5" fill="#ffff00"/>
<rect x="1272.8" y="562.9" width="8.0" height="8.5" fill="#ffff00"/>
<rect x="1272.8" y="626.6" width="8.0" height="8.5" fill="#ffff00"/>
<rect x="1272.8" y="639.5" width="8.0" height="8.5" fill="#ffff00"/>
<rect x="1272.8" y="703.6" width="8.0" height="8.5" fill="#ffff00"/>
<rect x="1272.8" y="717.1" width="8.0" height="8.5" fill="#ffff00"/>
<rect x="1173.0" y="510.5" width="5.0" height="4.7" fill="#ffff00"/>
<rect x="1173.0" y="517.0" width="5.0" height="4.7" fill="#ffff00"/>
<rect x="1183.8" y="510.5" width="5.0" height="4.7" fill="#ffff00"/>
<rect x="1183.8" y="517.0" width="5.0" height="4.7" fill="#ffff00"/>
<rect x="1198.0" y="510.5" width="5.0" height="4.7" fill="#ffff00"/>
<rect x="1198.0" y="517.0" width="5.0" height="4.7" fill="#ffff00"/>
<rect x="1222.9" y="510.5" width="5.0" height="4.7" fill="#ffff00"/>
<rect x="1222.9" y="517.0" width="5.0" height="4.7" fill="#ffff00"/>
<rect x="1234.0" y="510.5" width="5.0" height="4.7" fill="#ffff00"/>
<rect x="1234.0" y="517.0" width="5.0" height="4.7" fill="#ffff00"/>
<rect x="1173.0" y="526.5" width="5.0" height="4.7" fill="#ffff00"/>
<rect x="1173.0" y="533.0" width="5.0" height="4.7" fill="#ffff00"/>
<rect x="1183.8" y="526.5" width="5.0" height="4.7" fill="#ffff00"/>
<rect x="1183.8" y="533.0" width="5.0" height="4.7" fill="#ffff00"/>
<rect x="1198.0" y="526.5" width="5.0" height="4.7" fill="#ffff00"/>
<rect x="1198.0" y="533.0" width="5.0" height="4.7" fill="#ffff00"/>
<rect x="1215.0" y="526.5" width="5.0" height="4.7" fill="#ffff00"/>
<rect x="1215.0" y="533.0" width="5.0" height="4.7" fill="#ffff00"/>
<rect x="1222.0" y="526.5" width="5.0" height="4.7" fill="#ffff00"/>
<rect x="1222.0" y="533.0" width="5.0" height="4.7" fill="#ffff00"/>
<rect x="1234.0" y="526.5" width="5.0" height="4.7" fill="#ffff00"/>
<rect x="1234.0" y="533.0" width="5.0" height="4.7" fill="#ffff00"/>
<rect x="1174.8" y="588.1" width="5.0" height="4.7" fill="#ffff00"/>
<rect x="1174.8" y="594.9" width="5.0" height="4.7" fill="#ffff00"/>
<rect x="1185.9" y="588.1" width="5.0" height="4.7" fill="#ffff00"/>
<rect x="1185.9" y="594.9" width="5.0" height="4.7" fill="#ffff00"/>
<rect x="1198.4" y="588.1" width="5.0" height="4.7" fill="#ffff00"/>
<rect x="1198.4" y="594.9" width="5.0" height="4.7" fill="#ffff00"/>
<rect x="1235.9" y="588.1" width="5.0" height="4.7" fill="#ffff00"/>
<rect x="1235.9" y="594.9" width="5.0" height="4.7" fill="#ffff00"/>
<rect x="1174.8" y="604.6" width="5.0" height="4.7" fill="#ffff00"/>
<rect x="1174.8" y="610.9" width="5.0" height="4.7" fill="#ffff00"/>
<rect x="1185.9" y="604.6" width="5.0" height="4.7" fill="#ffff00"/>
<rect x="1185.9" y="610.9" width="5.0" height="4.7" fill="#ffff00"/>
<rect x="1214.0" y="604.6" width="5.0" height="4.7" fill="#ffff00"/>
<rect x="1214.0" y="610.9" width="5.0" height="4.7" fill="#ffff00"/>
<rect x="1221.4" y="604.6" width="5.0" height="4.7" fill="#ffff00"/>
<rect x="1221.4" y="610.9" width="5.0" height="4.7" fill="#ffff00"/>
<rect x="1235.9" y="604.6" width="5.0" height="4.7" fill="#ffff00"/>
<rect x="1235.9" y="610.9" width="5.0" height="4.7" fill="#ffff00"/>
<rect x="1177.1" y="666.1" width="5.0" height="4.7" fill="#ffff00"/>
<rect x="1177.1" y="672.0" width="5.0" height="4.7" fill="#ffff00"/>
<rect x="1186.9" y="666.1" width="5.0" height="4.7" fill="#ffff00"/>
<rect x="1186.9" y="672.0" width="5.0" height="4.7" fill="#ffff00"/>
<rect x="1200.8" y="666.1" width="5.0" height="4.7" fill="#ffff00"/>
<rect x="1200.8" y="672.0" width="5.0" height="4.7" fill="#ffff00"/>
<rect x="1222.0" y="666.1" width="5.0" height="4.7" fill="#ffff00"/>
<rect x="1222.0" y="672.0" width="5.0" height="4.7" fill="#ffff00"/>
<rect x="1237.0" y="666.1" width="5.0" height="4.7" fill="#ffff00"/>
<rect x="1237.0" y="672.0" width="5.0" height="4.7" fill="#ffff00"/>
<rect x="1177.1" y="682.4" width="5.0" height="4.7" fill="#ffff00"/>
<rect x="1177.1" y="688.4" width="5.0" height="4.7" fill="#ffff00"/>
<rect x="1186.9" y="682.4" width="5.0" height="4.7" fill="#ffff00"/>
<rect x="1186.9" y="688.4" width="5.0" height="4.7" fill="#ffff00"/>
<rect x="1211.3" y="682.4" width="5.0" height="4.7" fill="#ffff00"/>
<rect x="1211.3" y="688.4" width="5.0" height="4.7" fill="#ffff00"/>
<rect x="1222.0" y="682.4" width="5.0" height="4.7" fill="#ffff00"/>
<rect x="1222.0" y="688.4" width="5.0" height="4.7" fill="#ffff00"/>
<rect x="1237.0" y="682.4" width="5.0" height="4.7" fill="#ffff00"/>
<rect x="1237.0" y="688.4" width="5.0" height="4.7" fill="#ffff00"/>
<rect x="1163.9" y="743.6" width="5.0" height="4.7" fill="#ffff00"/>
<rect x="1163.9" y="749.9" width="5.0" height="4.7" fill="#ffff00"/>
<rect x="1174.0" y="743.6" width="5.0" height="4.7" fill="#ffff00"/>
<rect x="1174.0" y="749.9" width="5.0" height="4.7" fill="#ffff00"/>
<rect x="1190.0" y="743.6" width="5.0" height="4.7" fill="#ffff00"/>
<rect x="1190.0" y="749.9" width="5.0" height="4.7" fill="#ffff00"/>
<rect x="1200.8" y="743.6" width="5.0" height="4.7" fill="#ffff00"/>
<rect x="1200.8" y="749.9" width="5.0" height="4.7" fill="#ffff00"/>
<rect x="1235.9" y="743.6" width="5.0" height="4.7" fill="#ffff00"/>
<rect x="1235.9" y="749.9" width="5.0" height="4.7" fill="#ffff00"/>
<g stroke="#ffffff" stroke-width="1.05" fill="none">
<path d="M87.6,628 L501.5,915.5 M354,627.7 L501.5,885.5 M933.3,628.2 L864.5,885.5 M1057.6,628.2 L864.5,915.5"/>
<rect x="501.5" y="885.5" width="363" height="30"/>
</g>
<g stroke="#ffffff" stroke-width="1.2" fill="none"><circle cx="235.5" cy="895.5" r="7"/><path d="M225,895.5 L246,895.5 M235.5,885 L235.5,906 M227.3,887.3 L243.7,903.7 M243.7,887.3 L227.3,903.7"/><circle cx="235.5" cy="895.5" r="1.3" fill="#fff"/></g>
</svg>
<div id="menubar">
<div class="abs" style="left:0;top:44px;width:1272px;height:2px;background:#4f7c7c"></div>
<div class="abs" style="left:0;top:46px;width:1469px;height:2px;background:#e8fcfc"></div>
<div class="abs" style="left:1270px;top:0;width:2px;height:46px;background:#4f7c7c"></div>
<div class="abs" style="left:1272px;top:0;width:2px;height:46px;background:#e8fcfc"></div>
<div class="abs" style="left:1274px;top:0;width:3px;height:48px;background:#4f7c7c"></div>
<div class="menu" style="left:-3px">Analysis</div>
<div class="menu" style="left:65px">DFM</div>
<div class="menu" style="left:114px"><span class="u">S</span>tep</div>
<div class="menu" style="left:159px"><span class="u">R</span>out</div>
<div class="menu" style="left:205px"><span class="u">W</span>indows</div>
<div class="menu" style="left:1228px">Help</div>
<svg class="abs" style="left:1278px;top:4px" width="28" height="30" viewBox="0 0 28 30"><path d="M7,4.2 L24.5,3.6 L23.8,6.8 Z M5.5,9.8 L23.3,9.2 L22.6,12.4 Z M4,16.3 L21.8,15.7 L21.1,18.9 Z M3,23.2 L21,22.6 L20.3,25.8 Z" fill="#ee1818"/></svg>
<div class="abs" style="left:1300px;top:2.8px;font:italic bold 32px 'Liberation Sans',sans-serif;line-height:32px;color:#10107e;-webkit-text-stroke:0.7px #10107e;white-space:nowrap">Fr</div>
<div class="abs" id="ntl" style="left:1352.5px;top:3.3px;font:italic bold 32.4px 'Liberation Sans',sans-serif;line-height:32px;color:#10107e;-webkit-text-stroke:0.7px #10107e;white-space:nowrap">ntline</div>
<svg class="abs" style="left:1331px;top:10px" width="26" height="26" viewBox="0 0 26 26"><circle cx="12.7" cy="12.7" r="8.3" fill="none" stroke="#10107e" stroke-width="2.6"/><path d="M12.7,9.2 L16.2,12.7 L12.7,16.2 L9.2,12.7 Z" fill="#ee1818"/></svg>
<div class="abs" style="left:1444.5px;top:-1.5px;font:22.5px 'Liberation Serif',serif;line-height:24px;color:#000;white-space:nowrap">Ge</div>
<div class="abs" style="left:1467px;top:34px;width:2px;height:3px;background:#000"></div>
</div>
<div id="status">
<div class="abs" style="left:0;top:2px;width:81px;height:26px;background:#fffecb;border-top:2px solid #a8a880;border-right:2px solid #a8a880"></div>
<div class="abs" style="left:84px;top:-1px;width:2px;height:29px;background:#4a7a70"></div>
<div class="abs" style="left:86px;top:0;width:28px;height:28px;background:#5fd0b8"></div>
<div class="abs" style="left:89px;top:3px;width:22px;height:25px;background:#fffecb;border-top:1px solid #fffff0;border-left:1px solid #fffff0;border-right:2px solid #b8b890"></div>
<div class="abs" style="left:92px;top:7px;width:16px;height:15px;border:1px solid #000;font:bold 14px 'Liberation Sans',sans-serif;text-align:center;line-height:14px">!</div>
<div class="abs" style="left:115px;top:-1px;width:2px;height:29px;background:#4a7a70"></div>
<div class="abs" style="left:120px;top:8px;font:bold 11.67px 'Liberation Mono',monospace;white-space:nowrap;color:#000">&lt;M1&gt; - Select first area corner</div>
</div>
<div id="win">
<div class="abs" style="left:0;top:0;width:1115px;height:598px;border:1px solid #34444e;border-radius:5px 5px 0 0"></div>
<div class="abs" style="left:1px;top:1px;width:1113px;height:596px;border-top:1px solid #f4f8ff;border-left:1px solid #f4f8ff;border-radius:4px 4px 0 0"></div>
<div class="abs" style="left:2px;top:2px;width:1112px;height:28px;background:linear-gradient(#95b2d3,#a6bedf 55%,#bad6ee);border-radius:3px 3px 0 0"></div>
<div class="abs" style="left:10px;top:11px;width:16px;height:15px;background:#fff;border:1px solid #222;border-top:2px solid #10108a;border-bottom:2px solid #222"></div>
<svg class="abs" style="left:12px;top:14px" width="12" height="10"><path d="M2 2 L10 9 M10 2 L2 9" stroke="#c8c820" stroke-width="2.2"/></svg>
<div class="abs" style="left:30px;top:11.5px;font:12.3px 'Liberation Sans',sans-serif;letter-spacing:0.3px;color:#1a2a3a;white-space:nowrap">Popview - 1</div>
<div class="abs" style="left:1074px;top:10px;width:31px;height:17px;border:1px solid #3a1a1a;border-radius:3px;background:linear-gradient(#f0b0a0 0%,#e08878 45%,#c84a30 50%,#d06048 85%,#e8a090 100%)"></div>
<svg class="abs" style="left:1082px;top:12px" width="16" height="12"><path d="M4.2,4 L10.8,8.6 M10.8,4 L4.2,8.6" stroke="#5a2a20" stroke-width="4" stroke-linecap="square" opacity="0.45"/><path d="M4.2,4 L10.8,8.6 M10.8,4 L4.2,8.6" stroke="#fff" stroke-width="2.5" stroke-linecap="square"/></svg>
<div class="abs" style="left:8px;top:30px;width:1062px;height:3px;background:#326d5d"></div>
<div class="abs" style="left:8px;top:30px;width:3px;height:531px;background:#326d5d"></div>
<div class="abs" style="left:9px;top:558px;width:1061px;height:3px;background:#c2f0de"></div>
<div class="abs" style="left:1067px;top:31px;width:3px;height:530px;background:#c2f0de"></div>
<div class="abs" style="left:11px;top:33px;width:1056px;height:525px;background:#000;overflow:hidden" id="cv">
<svg class="abs" style="left:0;top:0" width="1056" height="525" viewBox="30 63 1056 525" shape-rendering="crispEdges"><rect x="60.0" y="206.0" width="997.0" height="106.0" fill="#ff0000"/>
<rect x="92.9" y="208.0" width="13.2" height="59.0" fill="#ffff00"/>
<rect x="111.3" y="208.0" width="13.2" height="79.0" fill="#ffff00"/>
<rect x="129.7" y="208.0" width="13.2" height="79.0" fill="#ffff00"/>
<rect x="148.0" y="208.0" width="13.2" height="79.0" fill="#ffff00"/>
<rect x="166.4" y="208.0" width="13.2" height="79.0" fill="#ffff00"/>
<rect x="184.8" y="208.0" width="13.2" height="79.0" fill="#ffff00"/>
<rect x="203.2" y="208.0" width="13.2" height="79.0" fill="#ffff00"/>
<rect x="221.6" y="208.0" width="13.2" height="79.0" fill="#ffff00"/>
<rect x="239.9" y="208.0" width="13.2" height="79.0" fill="#ffff00"/>
<rect x="258.3" y="208.0" width="13.2" height="79.0" fill="#ffff00"/>
<rect x="276.7" y="208.0" width="13.2" height="79.0" fill="#ffff00"/>
<rect x="331.7" y="208.0" width="13.2" height="79.0" fill="#ffff00"/>
<rect x="350.1" y="208.0" width="13.2" height="79.0" fill="#ffff00"/>
<rect x="368.5" y="208.0" width="13.2" height="79.0" fill="#ffff00"/>
<rect x="386.9" y="208.0" width="13.2" height="79.0" fill="#ffff00"/>
<rect x="405.2" y="208.0" width="13.2" height="79.0" fill="#ffff00"/>
<rect x="423.6" y="208.0" width="13.2" height="79.0" fill="#ffff00"/>
<rect x="442.0" y="208.0" width="13.2" height="79.0" fill="#ffff00"/>
<rect x="460.4" y="208.0" width="13.2" height="79.0" fill="#ffff00"/>
<rect x="478.8" y="208.0" width="13.2" height="79.0" fill="#ffff00"/>
<rect x="497.2" y="208.0" width="13.2" height="79.0" fill="#ffff00"/>
<rect x="515.6" y="208.0" width="13.2" height="79.0" fill="#ffff00"/>
<rect x="534.0" y="208.0" width="13.2" height="79.0" fill="#ffff00"/>
<rect x="552.3" y="208.0" width="13.2" height="79.0" fill="#ffff00"/>
<rect x="570.7" y="208.0" width="13.2" height="79.0" fill="#ffff00"/>
<rect x="589.1" y="208.0" width="13.2" height="79.0" fill="#ffff00"/>
<rect x="607.5" y="208.0" width="13.2" height="79.0" fill="#ffff00"/>
<rect x="625.9" y="208.0" width="13.2" height="79.0" fill="#ffff00"/>
<rect x="644.3" y="208.0" width="13.2" height="79.0" fill="#ffff00"/>
<rect x="662.7" y="208.0" width="13.2" height="79.0" fill="#ffff00"/>
<rect x="681.1" y="208.0" width="13.2" height="79.0" fill="#ffff00"/>
<rect x="699.4" y="208.0" width="13.2" height="79.0" fill="#ffff00"/>
<rect x="717.8" y="208.0" width="13.2" height="79.0" fill="#ffff00"/>
<rect x="736.2" y="208.0" width="13.2" height="79.0" fill="#ffff00"/>
<rect x="754.6" y="208.0" width="13.2" height="79.0" fill="#ffff00"/>
<rect x="773.0" y="208.0" width="13.2" height="79.0" fill="#ffff00"/>
<rect x="791.4" y="208.0" width="13.2" height="79.0" fill="#ffff00"/>
<rect x="809.8" y="208.0" width="13.2" height="79.0" fill="#ffff00"/>
<rect x="828.1" y="208.0" width="13.2" height="79.0" fill="#ffff00"/>
<rect x="846.5" y="208.0" width="13.2" height="79.0" fill="#ffff00"/>
<rect x="864.9" y="208.0" width="13.2" height="79.0" fill="#ffff00"/>
<rect x="883.3" y="208.0" width="13.2" height="79.0" fill="#ffff00"/>
<rect x="901.7" y="208.0" width="13.2" height="79.0" fill="#ffff00"/>
<rect x="920.1" y="208.0" width="13.2" height="79.0" fill="#ffff00"/>
<rect x="938.5" y="208.0" width="13.2" height="79.0" fill="#ffff00"/>
<rect x="956.9" y="208.0" width="13.2" height="79.0" fill="#ffff00"/>
<rect x="975.2" y="208.0" width="13.2" height="79.0" fill="#ffff00"/>
<rect x="993.6" y="208.0" width="13.2" height="79.0" fill="#ffff00"/>
<rect x="1012.0" y="208.0" width="13.2" height="79.0" fill="#ffff00"/>
<path d="M28.0,89.8 A34.3,34.3 0 0 1 88.6,111.8 M97,312.8 L284,312.8 M338,312.8 L1022,312.8 M1032,79.2 L1090,79.2" fill="none" stroke="#8018b0" stroke-width="1.5"/>
<path d="M296.5,170.5 A14.3,10.5 0 0 1 325.2,170.5" fill="none" stroke="#2828c8" stroke-width="1" stroke-dasharray="2 2"/>
<path d="M28.0,91.5 A33.2,33.2 0 0 1 87.5,111.8 L87,116 L87,302.2 L96.5,312 M284.8,312 L292.3,303 L292.3,170.5 A18.5,14.2 0 0 1 329.5,170.5 L329.5,303 L337.5,312 M1022,312 L1031.2,303 L1031.2,79" fill="none" stroke="#ffffff" stroke-width="1.1"/>
<path d="M28.0,93.4 A32.1,32.1 0 0 1 86.4,111.8 L88.8,116 L88.8,302 L97.5,311 L285.5,311 L294.5,302 L294.5,170.5 A16.4,12.2 0 0 1 327.3,170.5 L327.3,302 L336.5,311 L1022.5,311 L1029.3,302.5 L1029.3,76.7 L1090,76.7" fill="none" stroke="#ffe000" stroke-width="1.8"/>
<circle cx="116.2" cy="88.0" r="3.6" fill="#18e818"/>
<circle cx="138.6" cy="88.0" r="3.6" fill="#18e818"/>
<circle cx="160.3" cy="88.0" r="3.6" fill="#18e818"/>
<circle cx="116.2" cy="107.6" r="3.6" fill="#18e818"/>
<circle cx="138.6" cy="107.6" r="3.6" fill="#18e818"/>
<circle cx="160.3" cy="107.6" r="3.6" fill="#18e818"/>
<circle cx="116.2" cy="127.0" r="3.6" fill="#18e818"/>
<circle cx="137.8" cy="127.0" r="3.6" fill="#18e818"/>
<circle cx="115.8" cy="146.8" r="3.6" fill="#18e818"/>
<circle cx="137.8" cy="146.8" r="3.6" fill="#18e818"/>
<circle cx="155.0" cy="193.1" r="3.6" fill="#18e818"/>
<circle cx="209.7" cy="192.7" r="3.6" fill="#18e818"/>
<circle cx="460.2" cy="75.1" r="3.6" fill="#18e818"/>
<circle cx="497.5" cy="82.2" r="3.6" fill="#18e818"/>
<circle cx="546.6" cy="82.2" r="3.6" fill="#18e818"/>
<circle cx="400.0" cy="121.7" r="3.6" fill="#18e818"/>
<circle cx="460.2" cy="121.7" r="3.6" fill="#18e818"/>
<circle cx="647.4" cy="173.3" r="3.6" fill="#18e818"/>
<circle cx="346.9" cy="194.0" r="3.6" fill="#18e818"/>
<circle cx="404.3" cy="193.0" r="3.6" fill="#18e818"/>
<circle cx="448.9" cy="194.8" r="3.6" fill="#18e818"/>
<circle cx="495.5" cy="194.3" r="3.6" fill="#18e818"/>
<circle cx="531.5" cy="194.8" r="3.6" fill="#18e818"/>
<circle cx="568.8" cy="191.0" r="3.6" fill="#18e818"/>
<circle cx="605.3" cy="194.3" r="3.6" fill="#18e818"/>
<circle cx="639.8" cy="194.0" r="3.6" fill="#18e818"/>
<circle cx="677.6" cy="194.0" r="3.6" fill="#18e818"/>
<circle cx="717.2" cy="163.5" r="3.6" fill="#18e818"/>
<circle cx="750.4" cy="168.9" r="3.6" fill="#18e818"/>
<circle cx="792.4" cy="168.9" r="3.6" fill="#18e818"/>
<circle cx="862.1" cy="168.9" r="3.6" fill="#18e818"/>
<circle cx="899.7" cy="173.0" r="3.6" fill="#18e818"/>
<circle cx="936.7" cy="173.0" r="3.6" fill="#18e818"/>
<circle cx="965.0" cy="168.9" r="3.6" fill="#18e818"/>
<circle cx="706.3" cy="191.2" r="3.6" fill="#18e818"/>
<circle cx="752.6" cy="192.6" r="3.6" fill="#18e818"/>
<circle cx="786.7" cy="192.9" r="3.6" fill="#18e818"/>
<circle cx="825.6" cy="192.6" r="3.6" fill="#18e818"/>
<circle cx="862.6" cy="192.9" r="3.6" fill="#18e818"/>
<circle cx="898.3" cy="192.9" r="3.6" fill="#18e818"/>
<circle cx="935.3" cy="192.9" r="3.6" fill="#18e818"/>
<circle cx="971.3" cy="194.8" r="3.6" fill="#18e818"/>
<circle cx="1009.1" cy="188.5" r="3.6" fill="#18e818"/>
<polygon points="252.1,101.3 260.5,101.3 266.5,107.3 266.5,115.7 260.5,121.7 252.1,121.7 246.1,115.7 246.1,107.3" fill="#ffff00"/></svg>
</div>
<div class="abs" style="left:1070px;top:30px;width:37px;height:531px;background:#000"></div>
<div class="abs" style="left:1071px;top:276px;width:35px;height:285px;background:#55c9a8"></div>
<div class="abs" style="left:1072px;top:32px;width:33px;height:33px;background:#98d8d4;border-top:2px solid #5cc8a8;border-left:2px solid #5cc8a8;border-right:2px solid #5cc8a8;border-bottom:2px solid #5cc8a8"></div>
<div class="abs" style="left:1074px;top:34px;width:29px;height:29px;border-top:2px solid #c4f4ee;border-left:2px solid #c4f4ee;border-right:2px solid #4a9686;border-bottom:2px solid #4a9686"></div>
<div class="abs" style="left:1078px;top:38px;width:21px;height:21px;background:#9cdcd8;border:1.5px solid #000"></div>
<svg class="abs" style="left:1078px;top:38px" width="21" height="21" viewBox="0 0 21 21"><rect x="3" y="6" width="8.6" height="8.6" fill="none" stroke="#000" stroke-width="2.2"/><path d="M5,10.2 L10,10.2 M7.4,7.8 L5,10.2 L7.4,12.6" fill="none" stroke="#000" stroke-width="1.1"/><rect x="14" y="2.8" width="4.2" height="4.2" fill="none" stroke="#000" stroke-width="1.3"/><path d="M16,7 L16,10.2 L12.4,10.2" fill="none" stroke="#000" stroke-width="1.2"/></svg>
<div class="abs" style="left:1072px;top:67px;width:33px;height:33px;background:#98d8d4;border-top:2px solid #5cc8a8;border-left:2px solid #5cc8a8;border-right:2px solid #5cc8a8;border-bottom:2px solid #5cc8a8"></div>
<div class="abs" style="left:1074px;top:69px;width:29px;height:29px;border-top:2px solid #c4f4ee;border-left:2px solid #c4f4ee;border-right:2px solid #4a9686;border-bottom:2px solid #4a9686"></div>
<div class="abs" style="left:1078px;top:73px;width:21px;height:21px;background:#9cdcd8;border:1.5px solid #000"></div>
<svg class="abs" style="left:1078px;top:73px" width="21" height="21" viewBox="0 0 21 21"><path d="M7.2,9 L3.1,9 L3.1,17.7 L17.5,17.7 L17.5,9 L12.9,9" fill="none" stroke="#000" stroke-width="2.3"/><path d="M10.3,1.9 L15.1,5.8 L12.9,5.8 L12.9,12.3 L6.4,12.3 L6.4,5.8 L4.3,5.8 Z" fill="#000"/></svg>
<div class="abs" style="left:1072px;top:102px;width:33px;height:33px;background:#98d8d4;border-top:2px solid #5cc8a8;border-left:2px solid #5cc8a8;border-right:2px solid #5cc8a8;border-bottom:2px solid #5cc8a8"></div>
<div class="abs" style="left:1074px;top:104px;width:29px;height:29px;border-top:2px solid #c4f4ee;border-left:2px solid #c4f4ee;border-right:2px solid #4a9686;border-bottom:2px solid #4a9686"></div>
<div class="abs" style="left:1078px;top:108px;width:21px;height:21px;background:#9cdcd8;border:1.5px solid #000"></div>
<svg class="abs" style="left:1078px;top:108px" width="21" height="21" viewBox="0 0 21 21"><path d="M7.2,11.4 L3.2,11.4 L3.2,3.2 L17.5,3.2 L17.5,11.4 L12.9,11.4" fill="none" stroke="#000" stroke-width="2.3"/><path d="M10.4,18.6 L15.8,14.6 L13.6,14.6 L13.6,7.9 L7.2,7.9 L7.2,14.6 L5,14.6 Z" fill="#000"/></svg>
<div class="abs" style="left:1072px;top:137px;width:33px;height:33px;background:#98d8d4;border-top:2px solid #5cc8a8;border-left:2px solid #5cc8a8;border-right:2px solid #5cc8a8;border-bottom:2px solid #5cc8a8"></div>
<div class="abs" style="left:1074px;top:139px;width:29px;height:29px;border-top:2px solid #c4f4ee;border-left:2px solid #c4f4ee;border-right:2px solid #4a9686;border-bottom:2px solid #4a9686"></div>
<div class="abs" style="left:1078px;top:143px;width:21px;height:21px;background:#9cdcd8;border:1.5px solid #000"></div>
<svg class="abs" style="left:1078px;top:143px" width="21" height="21" viewBox="0 0 21 21"><path d="M8.3,6.2 L8.3,3 L17.5,3 L17.5,17.4 L8.3,17.4 L8.3,14" fill="none" stroke="#000" stroke-width="2.3"/><path d="M1.1,10.2 L4.6,4.8 L4.6,7 L11.8,7 L11.8,13.4 L4.6,13.4 L4.6,15.6 Z" fill="#000"/></svg>
<div class="abs" style="left:1072px;top:172px;width:33px;height:33px;background:#98d8d4;border-top:2px solid #5cc8a8;border-left:2px solid #5cc8a8;border-right:2px solid #5cc8a8;border-bottom:2px solid #5cc8a8"></div>
<div class="abs" style="left:1074px;top:174px;width:29px;height:29px;border-top:2px solid #c4f4ee;border-left:2px solid #c4f4ee;border-right:2px solid #4a9686;border-bottom:2px solid #4a9686"></div>
<div class="abs" style="left:1078px;top:178px;width:21px;height:21px;background:#9cdcd8;border:1.5px solid #000"></div>
<svg class="abs" style="left:1078px;top:178px" width="21" height="21" viewBox="0 0 21 21"><path d="M12.3,6.2 L12.3,3.1 L3.2,3.1 L3.2,17.2 L12.3,17.2 L12.3,14" fill="none" stroke="#000" stroke-width="2.3"/><path d="M19,10.1 L15.4,4.6 L15.4,7.1 L8.2,7.1 L8.2,13.2 L15.4,13.2 L15.4,15.4 Z" fill="#000"/></svg>
<div class="abs" style="left:1072px;top:207px;width:33px;height:33px;background:#98d8d4;border-top:2px solid #5cc8a8;border-left:2px solid #5cc8a8;border-right:2px solid #5cc8a8;border-bottom:2px solid #5cc8a8"></div>
<div class="abs" style="left:1074px;top:209px;width:29px;height:29px;border-top:2px solid #c4f4ee;border-left:2px solid #c4f4ee;border-right:2px solid #4a9686;border-bottom:2px solid #4a9686"></div>
<div class="abs" style="left:1078px;top:213px;width:21px;height:21px;background:#9cdcd8;border:1.5px solid #000"></div>
<svg class="abs" style="left:1078px;top:213px" width="21" height="21" viewBox="0 0 21 21"><rect x="8.1" y="7.9" width="4.6" height="4.6" fill="none" stroke="#000" stroke-width="2"/><path d="M5.2,2.3 L15.6,2.3 M5.2,18.2 L15.6,18.2 M2,4.6 L2,15.8 M18.9,4.6 L18.9,15.8" stroke="#000" stroke-width="1.2"/><path d="M7,2.3 L13.8,2.3 L10.4,5.8 Z M7,18.2 L13.8,18.2 L10.4,14.7 Z M2,6.8 L2,13.6 L5.8,10.2 Z M18.9,6.8 L18.9,13.6 L15.1,10.2 Z" fill="#000" stroke="#000" stroke-width="1"/></svg>
<div class="abs" style="left:1072px;top:242px;width:33px;height:33px;background:#98d8d4;border-top:2px solid #5cc8a8;border-left:2px solid #5cc8a8;border-right:2px solid #5cc8a8;border-bottom:2px solid #5cc8a8"></div>
<div class="abs" style="left:1074px;top:244px;width:29px;height:29px;border-top:2px solid #c4f4ee;border-left:2px solid #c4f4ee;border-right:2px solid #4a9686;border-bottom:2px solid #4a9686"></div>
<div class="abs" style="left:1078px;top:248px;width:21px;height:21px;background:#9cdcd8;border:1.5px solid #000"></div>
<svg class="abs" style="left:1078px;top:248px" width="21" height="21" viewBox="0 0 21 21"><rect x="8.4" y="8.1" width="4" height="4" fill="none" stroke="#000" stroke-width="1.5"/><path d="M10.4,1 L14.6,4.4 L12.4,4.4 L12.4,5.3 L8.4,5.3 L8.4,4.4 L6.2,4.4 Z M10.4,19 L14.6,15.6 L12.4,15.6 L12.4,14.7 L8.4,14.7 L8.4,15.6 L6.2,15.6 Z M1.3,10.1 L4.7,5.9 L4.7,8.1 L5.6,8.1 L5.6,12.1 L4.7,12.1 L4.7,14.3 Z M19.5,10.1 L16.1,5.9 L16.1,8.1 L15.2,8.1 L15.2,12.1 L16.1,12.1 L16.1,14.3 Z" fill="#000"/></svg>
<div class="abs" style="left:8px;top:561px;width:1099px;height:29px;background:#000"></div>
<div class="abs" style="left:9px;top:562px;width:1097px;height:27px;background:#5cc8a8"></div>
<div class="abs" style="left:11px;top:564px;width:1093px;height:23px;background:#9cdada;border-top:2px solid #c8f8f4;border-left:2px solid #c8f8f4;border-bottom:2px solid #4a8a7c;border-right:2px solid #4a8a7c"></div>
<div class="abs" style="left:535.5px;top:567.5px;font:bold 14.6px 'Liberation Mono',monospace;color:#000;white-space:nowrap">Close</div>
</div>
</body></html>
